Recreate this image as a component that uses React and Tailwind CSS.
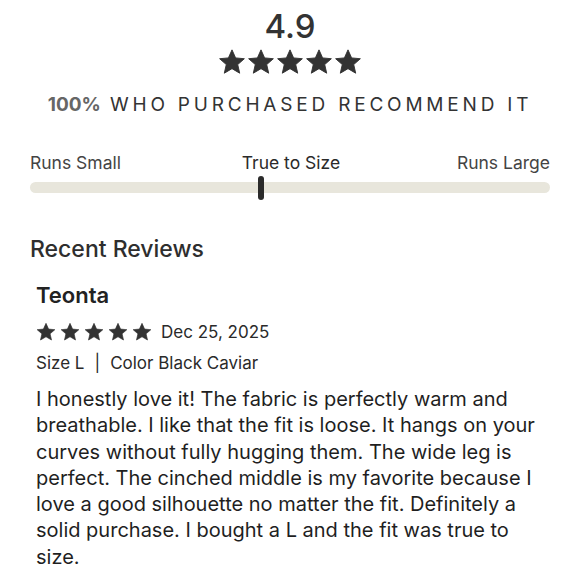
import React from "react";

function StarIcon({ className }) {
  return (
    <svg viewBox="0 0 24 24" className={className} fill="currentColor">
      <path
        d="M12 1.6l3.1 6.9 7.5.7-5.7 5 1.7 7.4L12 17.7l-6.6 3.9 1.7-7.4-5.7-5 7.5-.7z"
        stroke="currentColor"
        strokeWidth="0.8"
        strokeLinejoin="round"
      />
    </svg>
  );
}

function Stars({ size, gap }) {
  return (
    <div className={`flex ${gap}`}>
      {[0, 1, 2, 3, 4].map((i) => (
        <StarIcon key={i} className={size} />
      ))}
    </div>
  );
}

const body =
  "I honestly love it! The fabric is perfectly warm and breathable. I like that the fit is loose. It hangs on your curves without fully hugging them. The wide leg is perfect. The cinched middle is my favorite because I love a good silhouette no matter the fit. Definitely a solid purchase. I bought a L and the fit was true to size.";

export default function App() {
  return (
    <div className="w-[580px] h-[580px] overflow-hidden bg-white font-['Inter',sans-serif] text-[#2a2a2a]">
      {/* Rating summary */}
      <div className="flex flex-col items-center pt-[7px]">
        <div className="text-[33px] font-medium leading-[38px] text-[#333]">4.9</div>
        <div className="mt-[3px] text-[#333]">
          <Stars size="w-[28px] h-[28px]" gap="gap-[1px]" />
        </div>
        <div className="mt-[17px] text-[19px] leading-[24px] tracking-[0.2em] text-[#333]">
          <span className="font-bold text-[#666] tracking-normal">100%</span> WHO PURCHASED RECOMMEND IT
        </div>
      </div>

      {/* Fit slider */}
      <div className="px-[30px] mt-[35px]">
        <div className="flex justify-between text-[17.5px] leading-[22px] text-[#444]">
          <span>Runs Small</span>
          <span className="text-[#2a2a2a] pl-[4px]">True to Size</span>
          <span>Runs Large</span>
        </div>
        <div className="relative mt-[8px] h-[11px] rounded-full bg-[#e8e6dc]">
          <div className="absolute left-[228px] top-[-6px] h-[24px] w-[6px] rounded-full bg-[#2b2b2b]" />
        </div>
      </div>

      {/* Reviews */}
      <div className="px-[30px] mt-[42px]">
        <h2 className="text-[23px] font-medium leading-[28px] text-[#2e2e2e]">Recent Reviews</h2>
        <div className="pl-[6px] mt-[19px]">
          <div className="text-[22px] font-semibold leading-[26px] text-[#222]">Teonta</div>
          <div className="mt-[13px] flex items-center gap-[9px]">
            <div className="text-[#333]">
              <Stars size="w-[20px] h-[20px]" gap="gap-[4px]" />
            </div>
            <span className="text-[17px] leading-[22px]">Dec 25, 2025</span>
          </div>
          <div className="mt-[9px] flex items-center text-[17px] leading-[22px]">
            <span>Size L</span>
            <span className="mx-[10px]">|</span>
            <span>Color Black Caviar</span>
          </div>
          <p className="mt-[12px] text-[20px] leading-[26.3px] text-[#1f1f1f]">{body}</p>
        </div>
      </div>
    </div>
  );
}
